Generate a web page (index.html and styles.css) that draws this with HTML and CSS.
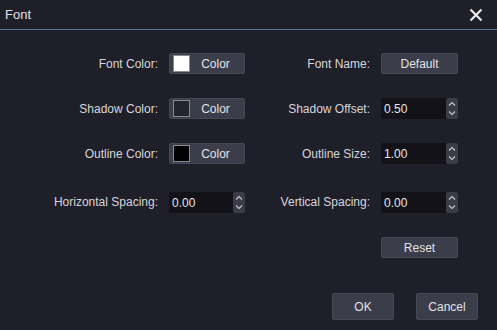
FILE: index.html
```html
<!DOCTYPE html>
<html>
<head>
<meta charset="utf-8">
<link rel="stylesheet" href="styles.css">
</head>
<body>
<div class="dialog">
  <div class="titlebar">
    <span class="title">Font</span>
    <svg class="close" width="14" height="14" viewBox="0 0 14 14"><path d="M1.5 1.5 L12.5 12.5 M12.5 1.5 L1.5 12.5" stroke="#ececec" stroke-width="2.2" fill="none"/></svg>
  </div>
  <div class="content">
    <div class="form">
      <label class="lbl">Font Color:</label>
      <button class="btn color-btn"><span class="swatch white"></span><span class="btn-text">Color</span></button>
      <label class="lbl">Font Name:</label>
      <button class="btn">Default</button>

      <label class="lbl">Shadow Color:</label>
      <button class="btn color-btn"><span class="swatch dark"></span><span class="btn-text">Color</span></button>
      <label class="lbl">Shadow Offset:</label>
      <div class="spin"><span class="val">0.50</span><span class="arrows"><svg width="12" height="21" viewBox="0 0 12 21"><path d="M3 7.5 L6 4.5 L9 7.5 M3 13.5 L6 16.5 L9 13.5" stroke="#c8c8d0" stroke-width="1.1" fill="none"/></svg></span></div>

      <label class="lbl">Outline Color:</label>
      <button class="btn color-btn"><span class="swatch black"></span><span class="btn-text">Color</span></button>
      <label class="lbl">Outline Size:</label>
      <div class="spin"><span class="val">1.00</span><span class="arrows"><svg width="12" height="21" viewBox="0 0 12 21"><path d="M3 7.5 L6 4.5 L9 7.5 M3 13.5 L6 16.5 L9 13.5" stroke="#c8c8d0" stroke-width="1.1" fill="none"/></svg></span></div>

      <label class="lbl low">Horizontal Spacing:</label>
      <div class="spin low"><span class="val">0.00</span><span class="arrows"><svg width="12" height="21" viewBox="0 0 12 21"><path d="M3 7.5 L6 4.5 L9 7.5 M3 13.5 L6 16.5 L9 13.5" stroke="#c8c8d0" stroke-width="1.1" fill="none"/></svg></span></div>
      <label class="lbl low">Vertical Spacing:</label>
      <div class="spin low"><span class="val">0.00</span><span class="arrows"><svg width="12" height="21" viewBox="0 0 12 21"><path d="M3 7.5 L6 4.5 L9 7.5 M3 13.5 L6 16.5 L9 13.5" stroke="#c8c8d0" stroke-width="1.1" fill="none"/></svg></span></div>

      <span class="empty"></span>
      <span class="empty"></span>
      <span class="empty"></span>
      <button class="btn">Reset</button>
    </div>
    <div class="footer">
      <button class="btn big">OK</button>
      <button class="btn big">Cancel</button>
    </div>
  </div>
</div>
</body>
</html>
```

FILE: styles.css
```css
html, body {
  margin: 0;
  padding: 0;
  background: #1f1f29;
}
body {
  width: 497px;
  height: 330px;
  overflow: hidden;
  font-family: "Liberation Sans", Arial, sans-serif;
  font-size: 12px;
  color: #d6d6da;
}
.dialog {
  width: 497px;
  height: 330px;
  display: flex;
  flex-direction: column;
  background: #1f1f29;
}
.titlebar {
  height: 29px;
  border-bottom: 1px solid #4e7393;
  display: flex;
  align-items: center;
  justify-content: space-between;
  padding: 0 14px 0 5px;
  box-sizing: content-box;
}
.title {
  font-size: 13px;
  color: #e2e2e6;
  margin-top: -1px;
}
.close {
  display: block;
  margin-top: 1px;
}
.content {
  flex: 1;
  display: flex;
  flex-direction: column;
  padding-top: 23px;
}
.form {
  display: grid;
  grid-template-columns: 158px 76px 114px 77px;
  grid-template-rows: 21px 21px 21px 25px 21px;
  column-gap: 11px;
  row-gap: 24px;
  align-items: center;
}
.lbl {
  text-align: right;
  color: #d6d6da;
  white-space: nowrap;
}
.low {
  align-self: end;
}
.lbl.low {
  line-height: 21px;
}
.btn {
  font-family: "Liberation Sans", Arial, sans-serif;
  font-size: 12px;
  color: #e2e2e6;
  background: #3b3d4a;
  border: 1px solid #464856;
  border-radius: 2px;
  height: 21px;
  padding: 0;
  margin: 0;
  display: flex;
  align-items: center;
  justify-content: center;
  box-sizing: border-box;
}
.color-btn {
  justify-content: flex-start;
  padding-left: 3px;
}
.btn-text {
  flex: 1;
  text-align: center;
  padding-right: 3px;
}
.swatch {
  width: 17px;
  height: 17px;
  box-sizing: border-box;
  border: 1px solid #8a8a90;
}
.swatch.white { background: #ffffff; }
.swatch.dark { background: #22232c; }
.swatch.black { background: #000000; }
.spin {
  height: 21px;
  background: #121218;
  display: flex;
  align-items: center;
  border-radius: 2px;
}
.val {
  flex: 1;
  padding-left: 3px;
  color: #e6e6ea;
}
.arrows {
  width: 12px;
  height: 21px;
  background: #3a3c48;
  border-radius: 2px;
  display: block;
}
.arrows svg {
  display: block;
}
.footer {
  margin-top: auto;
  margin-bottom: 10px;
  display: flex;
  justify-content: flex-end;
  gap: 22px;
  padding-right: 19px;
}
.btn.big {
  width: 62px;
  height: 27px;
}
```
